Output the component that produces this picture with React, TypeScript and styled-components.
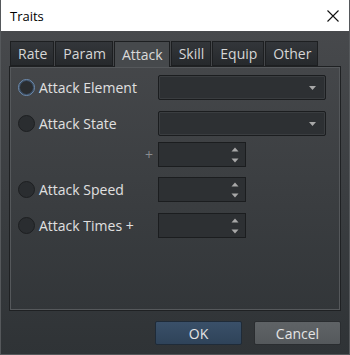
import { FC } from 'react';
import styled, { createGlobalStyle } from 'styled-components';

const Global = createGlobalStyle`
    html, body {
        margin: 0;
        padding: 0;
        background: #ffffff;
    }
    * {
        box-sizing: border-box;
    }
`;

const tabs = ['Rate', 'Param', 'Attack', 'Skill', 'Equip', 'Other'];

const Radio: FC<{ label: string; focused?: boolean }> = ({ label, focused }) => (
    <Sradio>
        <Sdot $focused={focused} />
        <span>{label}</span>
    </Sradio>
);

const Combo: FC = () => (
    <Scombo>
        <svg width="9" height="6" viewBox="0 0 9 6">
            <path d="M1 1 H8 L4.5 5 Z" fill="#a8a8a8" />
        </svg>
    </Scombo>
);

const Spin: FC = () => (
    <Sspin>
        <Sarrows>
            <svg width="8" height="5" viewBox="0 0 8 5">
                <path d="M4 0.5 L7.5 4.5 H0.5 Z" fill="#a8a8a8" />
            </svg>
            <svg width="8" height="5" viewBox="0 0 8 5">
                <path d="M0.5 0.5 H7.5 L4 4.5 Z" fill="#a8a8a8" />
            </svg>
        </Sarrows>
    </Sspin>
);

export default function App() {
    return (
        <>
            <Global />
            <Swindow>
                <Stitle>
                    <span>Traits</span>
                    <svg width="12" height="12" viewBox="0 0 12 12">
                        <path d="M0.5 0.5 L11.5 11.5 M11.5 0.5 L0.5 11.5" stroke="#111" strokeWidth="1.1" />
                    </svg>
                </Stitle>
                <Sbody>
                    <Stabs>
                        {tabs.map((t) => (
                            <Stab key={t} $active={t === 'Attack'}>{t}</Stab>
                        ))}
                    </Stabs>
                    <Spanel>
                        <Srow $top={0}>
                            <Radio label="Attack Element" focused />
                            <Combo />
                        </Srow>
                        <Srow $top={11}>
                            <Radio label="Attack State" />
                            <Combo />
                        </Srow>
                        <Srow $top={6}>
                            <Splus>+</Splus>
                            <Spin />
                        </Srow>
                        <Srow $top={10}>
                            <Radio label="Attack Speed" />
                            <Spin />
                        </Srow>
                        <Srow $top={11}>
                            <Radio label="Attack Times +" />
                            <Spin />
                        </Srow>
                    </Spanel>
                    <Sfooter>
                        <Sbutton $primary>OK</Sbutton>
                        <Sbutton>Cancel</Sbutton>
                    </Sfooter>
                </Sbody>
            </Swindow>
        </>
    );
}

const Swindow = styled.div`
    width: 350px;
    height: 355px;
    display: flex;
    flex-direction: column;
    font-family: "Open Sans", "Noto Sans", sans-serif;
    border: solid 1px #55585b;
    border-top: none;
`;

const Stitle = styled.div`
    height: 31px;
    flex: none;
    background: #ffffff;
    display: flex;
    align-items: center;
    justify-content: space-between;
    padding: 0 10px 0 9px;
    font-size: 13px;
    color: #000;
    font-family: "Open Sans", "Noto Sans", sans-serif;
`;

const Sbody = styled.div`
    flex: 1;
    display: flex;
    flex-direction: column;
    padding: 10px 8px 0 8px;
    background: linear-gradient(#47494c, #2f3336);
`;

const Stabs = styled.div`
    display: flex;
    gap: 1px;
    padding-left: 1px;
    height: 25px;
    position: relative;
    z-index: 1;
`;

const Stab = styled.div<{ $active?: boolean }>`
    height: ${(p) => (p.$active ? '26px' : '25px')};
    padding: 0 6px 0 7px;
    display: flex;
    align-items: center;
    font-size: 14px;
    color: ${(p) => (p.$active ? '#dadada' : '#d6d6d6')};
    background: ${(p) => (p.$active ? '#46494c' : 'linear-gradient(#33363a, #26292c)')};
    border: solid 1px #1d1f21;
    border-bottom: ${(p) => (p.$active ? 'none' : 'solid 1px #1d1f21')};
`;

const Spanel = styled.div`
    width: 332px;
    height: 245px;
    flex: none;
    border: solid 1px #1f2123;
    box-shadow: inset 0 0 0 1px #55585b;
    padding: 8px 14px 0 8px;
    display: flex;
    flex-direction: column;
`;

const Srow = styled.div<{ $top: number }>`
    display: flex;
    align-items: center;
    justify-content: flex-end;
    margin-top: ${(p) => p.$top}px;
`;

const Sradio = styled.div`
    flex: 1;
    display: flex;
    align-items: center;
    gap: 4px;
    font-size: 14px;
    color: #e0e0e0;
`;

const Sdot = styled.span<{ $focused?: boolean }>`
    width: 17px;
    height: 17px;
    border-radius: 50%;
    background: #2a2d30;
    border: solid 1px ${(p) => (p.$focused ? '#6f8fb4' : '#1d1f21')};
    box-shadow: ${(p) => (p.$focused ? 'inset 0 0 0 1px #3c5068' : 'none')};
`;

const Scombo = styled.div`
    width: 168px;
    height: 25px;
    background: #2d3033;
    border: solid 1px #1b1d1f;
    border-radius: 2px;
    box-shadow: inset 0 0 0 1px #3a3d40;
    display: flex;
    align-items: center;
    justify-content: flex-end;
    padding-right: 8px;
`;

const Sspin = styled.div`
    width: 88px;
    height: 25px;
    background: #2d3033;
    border: solid 1px #1b1d1f;
    display: flex;
    align-items: center;
    justify-content: flex-end;
    padding-right: 6px;
    margin-right: 80px;
`;

const Sarrows = styled.div`
    display: flex;
    flex-direction: column;
    gap: 6px;
`;

const Splus = styled.span`
    font-size: 14px;
    color: #8a8d90;
    margin-right: 5px;
`;

const Sfooter = styled.div`
    display: flex;
    justify-content: flex-end;
    gap: 12px;
    padding: 10px 0 0;
`;

const Sbutton = styled.button<{ $primary?: boolean }>`
    width: 87px;
    height: 24px;
    font-family: "Open Sans", "Noto Sans", sans-serif;
    font-size: 14px;
    color: #e4e4e4;
    background: ${(p) => (p.$primary ? 'linear-gradient(#3a5069, #2f4359)' : 'linear-gradient(#5f6366, #55595c)')};
    border: solid 1px ${(p) => (p.$primary ? '#1f2b38' : '#2a2d30')};
    border-radius: 2px;
    padding: 0;
`;
